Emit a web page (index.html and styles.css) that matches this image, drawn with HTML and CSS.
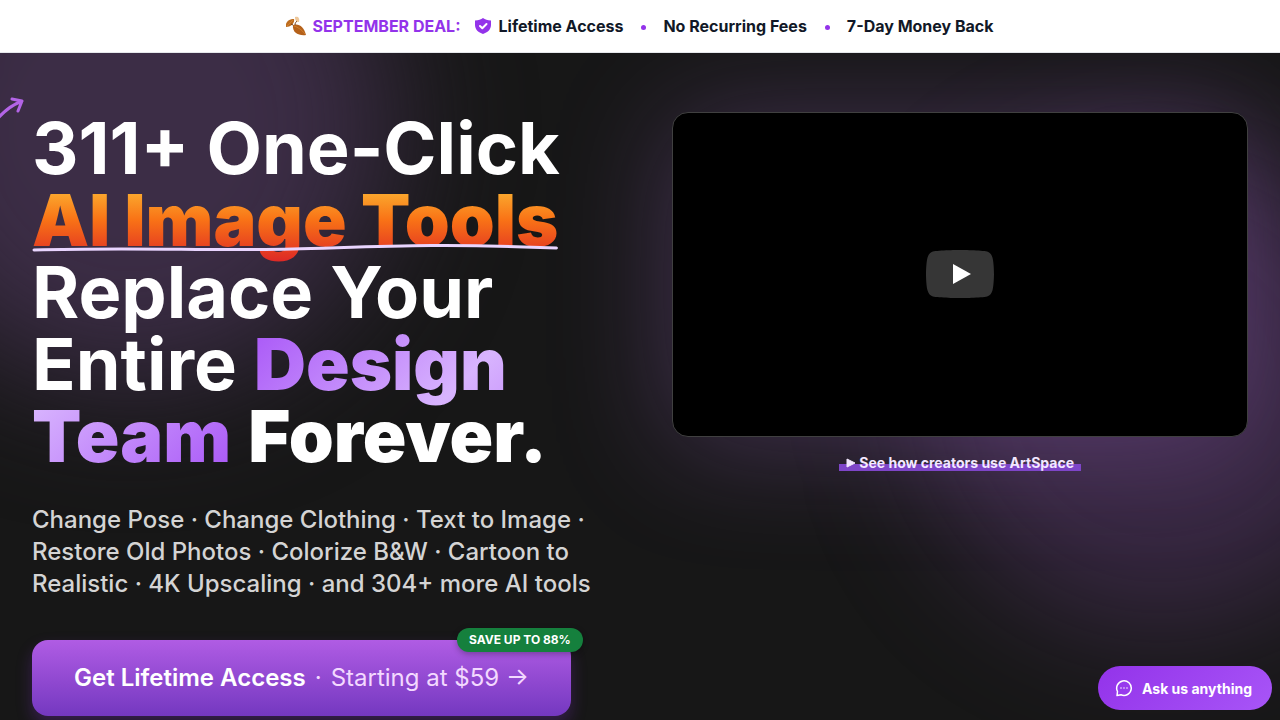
FILE: index.html
```html
<!DOCTYPE html>
<html lang="en">
<head>
  <meta charset="UTF-8" />
  <meta name="viewport" content="width=device-width, initial-scale=1.0" />
  <title>ArtSpace - Lifetime Access</title>
  <link rel="stylesheet" href="styles.css">
</head>
<body>
  <!-- Deal bar -->
  <header class="deal-bar">
    <span class="deal-label">
      <svg class="leaf-icon" viewBox="0 0 20 20" aria-hidden="true">
        <path d="M9 1c3-1 5 1 4 5-3 0-4-2-4-5z" fill="#eec79a" />
        <path d="M0 11C-1 6 3 3 8 3c1 4-3 8-8 8z" fill="#bd6c1e" />
        <path d="M7 9c6-2 11 2 13 10-7 1-14-2-13-10z" fill="#b5611a" />
        <path d="M8 10c4 1 8 4 11 8M1 10c2-2 4-4 6-6" fill="none" stroke="#d98a34" stroke-width=".7" />
        <path d="M9 9c0-2 1-3 2-4M7 9 5 8" fill="none" stroke="#6b3a17" />
      </svg>
      SEPTEMBER DEAL:
    </span>
    <ul class="deal-list">
      <li>
        <svg class="shield-icon" viewBox="0 0 16 16" aria-hidden="true">
          <path d="M8 0c2 1.500 4.500 2.400 8 2.400V7c0 4.500-3.500 7.500-8 9-4.500-1.500-8-4.500-8-9V2.400C3.500 2.400 6 1.500 8 0z" fill="#9333ea" />
          <path d="m5 8 2.300 2.200L11.500 6" fill="none" stroke="#fff" stroke-width="2" stroke-linecap="round" stroke-linejoin="round" />
        </svg>
        Lifetime Access
      </li>
      <li>No Recurring Fees</li>
      <li>7-Day Money Back</li>
    </ul>
  </header>

  <main class="hero">
    <div class="glow glow-left"></div>
    <div class="glow glow-right"></div>

    <div class="hero-text">
      <svg class="arrow-doodle" viewBox="0 0 40 40" aria-hidden="true">
        <path d="M4 38C11 23 21 12 38 5M28 3l10 2-4 10" />
      </svg>
      <h1>
        311+ One-Click<br>
        <span class="fire">AI Image Tools<svg class="underline" viewBox="0 0 526 10" preserveAspectRatio="none" aria-hidden="true">
            <path d="M2 7C100 4 180 8 260 6S400 0 524 5" />
          </svg></span><br>
        Replace Your<br>
        Entire <strong class="violet">Design Team</strong> <strong>Forever.</strong>
      </h1>
      <p class="tools">Change Pose · Change Clothing · Text to Image · Restore Old Photos · Colorize B&amp;W · Cartoon to Realistic · 4K Upscaling · and 304+ more AI tools</p>
      <a href="#pricing" class="cta">
        <b>Get Lifetime Access</b>
        <span class="cta-price">·</span>
        <span class="cta-price">Starting at $59 →</span>
        <span class="badge">SAVE UP TO 88%</span>
      </a>
    </div>

    <div class="hero-video">
      <div class="video">
        <button class="play" aria-label="Play video">
          <svg viewBox="0 0 68 48" aria-hidden="true">
            <path d="M66.520 7.740c-.78-2.930-2.490-5.410-5.420-6.190C55.790.13 34 0 34 0S12.210.13 6.900 1.550C3.970 2.330 2.270 4.810 1.480 7.740.06 13.050 0 24 0 24s.06 10.950 1.480 16.260c.78 2.930 2.490 5.410 5.420 6.190C12.210 47.870 34 48 34 48s21.790-.13 27.100-1.550c2.930-.78 4.640-3.260 5.420-6.190C67.940 34.950 68 24 68 24s-.06-10.950-1.480-16.260z" fill="#363636" />
            <path d="M45 24 27 14v20" fill="#fff" />
          </svg>
        </button>
      </div>
      <p class="caption"><mark><svg class="caption-icon" viewBox="0 0 10 10" aria-hidden="true"><path d="M1 1v8l8-4z" /></svg> See how creators use ArtSpace</mark></p>
    </div>
  </main>

  <button class="chat">
    <svg class="chat-icon" viewBox="0 0 18 18" aria-hidden="true">
      <path d="M2.500 12.500A7.300 7.300 0 1 1 6 15.800L2 16.500z" />
      <path d="M6 9h.01M9 9h.01M12 9h.01" />
    </svg>
    Ask us anything
  </button>
</body>
</html>
```
FILE: styles.css
```css
/* Global Styles */
* {
  box-sizing: border-box;
}

body {
  margin: 0;
  min-height: 100vh;
  display: flex;
  flex-direction: column;
  font-family: Inter, sans-serif;
  background: #171717;
  color: #fff;
}

/* Deal bar */
.deal-bar {
  display: flex;
  justify-content: center;
  align-items: center;
  gap: 14px;
  padding: 14px 16px;
  background: #fff;
  border-bottom: 1px solid #e5e7eb;
  color: #111827;
  font-size: 16px;
  font-weight: 700;
  line-height: 24px;
}

.deal-label {
  display: flex;
  align-items: center;
  gap: 6px;
  color: #9333ea;
}

.leaf-icon {
  width: 20px;
  height: 20px;
}

.deal-list {
  display: flex;
  margin: 0;
  padding: 0;
  list-style: none;
}

.deal-list li {
  display: flex;
  align-items: center;
}

.deal-list li + li::before {
  content: "";
  width: 5px;
  height: 5px;
  margin: 2px 17px 0 18px;
  border-radius: 50%;
  background: #9333ea;
}

.shield-icon {
  width: 16px;
  height: 16px;
  margin-right: 8px;
}

/* Hero */
.hero {
  position: relative;
  z-index: 1;
  flex: 1;
  display: grid;
  grid-template-columns: 1fr 1fr;
  align-items: start;
  gap: 64px;
  padding: 59px 32px 0;
  overflow: hidden;
}

/* Blurred blobs behind the content */
.glow {
  position: absolute;
  z-index: -1;
  border-radius: 50%;
  filter: blur(64px);
}

.glow-left {
  top: -188px;
  left: -128px;
  width: 520px;
  height: 520px;
  background: #3c2d46;
}

.glow-right {
  top: 96px;
  right: -120px;
  width: 480px;
  height: 480px;
  background: rgba(158, 94, 200, 0.24);
}

.hero-text {
  position: relative;
}

.arrow-doodle {
  position: absolute;
  top: -16px;
  left: -48px;
  width: 40px;
  height: 40px;
  fill: none;
  stroke: #b364e6;
  stroke-width: 3;
  stroke-linecap: round;
  stroke-linejoin: round;
}

h1 {
  margin: 0;
  font-size: 72px;
  font-weight: 700;
  line-height: 72px;
}

.fire {
  position: relative;
  font-weight: 900;
  background: linear-gradient(#fcc93c, #f97316 50%, #dc2626);
  -webkit-background-clip: text;
  background-clip: text;
  color: transparent;
}

.underline {
  position: absolute;
  left: 0;
  bottom: 10px;
  width: 100%;
  height: 10px;
  overflow: visible;
  fill: none;
  stroke: #e9d5ff;
  stroke-width: 3;
  stroke-linecap: round;
}

h1 strong {
  font-weight: 900;
}

.violet {
  background: linear-gradient(135deg, #a855f7, #d8b4fe 50%, #a855f7);
  -webkit-background-clip: text;
  background-clip: text;
  color: transparent;
}

.tools {
  margin: 32px 0 40px;
  color: #d4d4d4;
  font-size: 24px;
  font-weight: 500;
  line-height: 32px;
}

.cta {
  position: relative;
  display: inline-flex;
  align-items: center;
  gap: 9px;
  padding: 22px 42px;
  border-radius: 16px;
  background: linear-gradient(#b05ce4, #7438c0);
  box-shadow: 0 8px 16px rgba(147, 51, 234, 0.25);
  color: #fff;
  font-size: 24px;
  line-height: 32px;
  text-decoration: none;
}

.cta b {
  font-weight: 600;
}

.cta-price {
  color: #f3d9ff;
  font-weight: 400;
}

.badge {
  position: absolute;
  top: -12px;
  right: -12px;
  padding: 4px 12px;
  border-radius: 12px;
  background: #15803d;
  box-shadow: 0 2px 6px rgba(0, 0, 0, 0.3);
  font-size: 12px;
  font-weight: 700;
  line-height: 16px;
}

/* Video */
.video {
  box-sizing: content-box;
  display: flex;
  justify-content: center;
  align-items: center;
  aspect-ratio: 16 / 9;
  border: 1px solid #404040;
  border-radius: 16px;
  background: #000;
  box-shadow: 0 8px 120px rgba(168, 110, 215, 0.3);
}

.play {
  width: 68px;
  height: 48px;
  padding: 0;
  border: none;
  background: none;
  cursor: pointer;
}

.caption {
  margin: 16px 0 0;
  text-align: center;
  font-size: 14px;
  font-weight: 700;
  line-height: 20px;
}

.caption mark {
  padding: 0 7px;
  background: linear-gradient(transparent 60%, #7e45c8 60%);
  color: #f3e8ff;
}

.caption-icon {
  width: 10px;
  height: 10px;
  fill: #f3e8ff;
  stroke: #f3e8ff;
  stroke-linejoin: round;
}

/* Chat button */
.chat {
  position: fixed;
  z-index: 3;
  right: 8px;
  bottom: 10px;
  display: flex;
  align-items: center;
  gap: 9px;
  height: 44px;
  padding: 0 20px 0 17px;
  border: none;
  border-radius: 22px;
  background: linear-gradient(135deg, #9333ea, #a855f7);
  color: #fff;
  font-family: inherit;
  font-size: 14px;
  font-weight: 700;
  cursor: pointer;
}

.chat-icon {
  width: 18px;
  height: 18px;
  fill: none;
  stroke: #fff;
  stroke-width: 1.5;
  stroke-linecap: round;
  stroke-linejoin: round;
}
```
